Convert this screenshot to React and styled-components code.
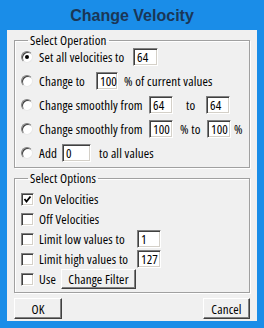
import React from "react";
import styled, { createGlobalStyle } from "styled-components";

const Global = createGlobalStyle`
  html, body { margin: 0; padding: 0; background: #1a8de8; }
  * { box-sizing: border-box; }
`;

const Window = styled.div`
  width: 264px;
  height: 328px;
  background: #1a8de8;
  padding: 0 7px 7px;
  display: flex;
  flex-direction: column;
  font-family: "Open Sans", "Liberation Sans", Arial, sans-serif;
  font-stretch: 75%;
  font-size: 13px;
  letter-spacing: 0.15px;
  color: #000;
`;

const Title = styled.div`
  height: 30px;
  display: flex;
  align-items: center;
  justify-content: center;
  font-family: "Liberation Sans", Arial, sans-serif;
  font-stretch: 100%;
  letter-spacing: 0;
  font-weight: bold;
  font-size: 16px;
  color: #1a3656;
  padding-top: 1px;
`;

const Panel = styled.div`
  flex: 1;
  background: #f0f0f0;
  padding: 5px 7px 2px;
  display: flex;
  flex-direction: column;
`;

const Group = styled.fieldset`
  margin: ${(p) => p.$mt || 0}px 0 0;
  padding: ${(p) => p.$pt || 0}px 0 ${(p) => p.$pb || 0}px 6px;
  border: 1px solid #a0a0a0;
  box-shadow: 1px 1px 0 #fff, inset 1px 1px 0 #fff;
  min-width: 0;
`;

const Legend = styled.legend`
  margin-left: 7px;
  padding: 0 2px;
  line-height: 10px;
  height: 10px;
  font-size: 13px;
`;

const Row = styled.div`
  height: ${(p) => p.$h}px;
  display: flex;
  align-items: center;
  white-space: nowrap;
`;

const Radio = styled.span`
  width: 12px;
  height: 12px;
  flex: none;
  border-radius: 50%;
  background: #fff;
  border: 1px solid;
  border-color: #808080 #e8e8e8 #e8e8e8 #808080;
  box-shadow: inset 1px 1px 0 #404040;
  display: flex;
  align-items: center;
  justify-content: center;
  margin-right: 6px;
  &::after {
    content: "";
    width: 4px;
    height: 4px;
    border-radius: 50%;
    background: ${(p) => (p.$on ? "#000" : "transparent")};
  }
`;

const Check = styled.span`
  width: 13px;
  height: 13px;
  flex: none;
  background: #fff;
  border: 1px solid;
  border-color: #808080 #fff #fff #808080;
  box-shadow: inset 1px 1px 0 #404040, inset -1px -1px 0 #d4d0c8;
  display: flex;
  align-items: center;
  justify-content: center;
  margin-right: 5px;
`;

const Text = styled.span`
  width: ${(p) => (p.$w ? `${p.$w}px` : "auto")};
  padding-left: ${(p) => p.$pl || 0}px;
  flex: none;
  overflow: visible;
`;

const Field = styled.span`
  width: ${(p) => p.$w}px;
  height: 18px;
  flex: none;
  background: #fff;
  border: 1px solid;
  border-color: #808080 #fff #fff #808080;
  box-shadow: inset 1px 1px 0 #404040, inset -1px -1px 0 #d4d0c8;
  padding: 0 0 0 3px;
  line-height: 16px;
  margin-right: ${(p) => p.$mr || 0}px;
`;

const Button = styled.button`
  width: ${(p) => p.$w}px;
  height: ${(p) => p.$h}px;
  flex: none;
  padding: 0;
  background: #f0f0f0;
  font: inherit;
  letter-spacing: inherit;
  color: #000;
  border: 1px solid;
  border-color: #fff #404040 #404040 #fff;
  box-shadow: inset -1px -1px 0 #808080;
  display: flex;
  align-items: center;
  justify-content: center;
`;

const Footer = styled.div`
  margin-top: 5px;
  display: flex;
  justify-content: space-between;
`;

const CheckMark = () => (
  <svg width="9" height="9" viewBox="0 0 9 9">
    <polyline points="1.5,4 3.5,6.5 7.5,1.5" fill="none" stroke="#000" strokeWidth="1.8" />
  </svg>
);

export default function App() {
  return (
    <>
      <Global />
      <Window>
        <Title>Change Velocity</Title>
        <Panel>
          <Group $pt={0} $pb={2}>
            <Legend>Select Operation</Legend>
            <Row $h={24}>
              <Radio $on />
              <Text $w={94}>Set all velocities to</Text>
              <Field $w={25}>64</Field>
            </Row>
            <Row $h={24}>
              <Radio />
              <Text $w={57}>Change to</Text>
              <Field $w={22} $mr={6}>100</Field>
              <Text>% of current values</Text>
            </Row>
            <Row $h={24}>
              <Radio />
              <Text $w={110}>Change smoothly from</Text>
              <Field $w={24}>64</Field>
              <Text $w={33} $pl={13}>to</Text>
              <Field $w={24}>64</Field>
            </Row>
            <Row $h={24}>
              <Radio />
              <Text $w={110}>Change smoothly from</Text>
              <Field $w={24}>100</Field>
              <Text $w={34} $pl={7}>% to</Text>
              <Field $w={24} $mr={3}>100</Field>
              <Text>%</Text>
            </Row>
            <Row $h={24}>
              <Radio />
              <Text $w={23}>Add</Text>
              <Field $w={29} $mr={8}>0</Field>
              <Text>to all values</Text>
            </Row>
          </Group>
          <Group $mt={5} $pt={6} $pb={3}>
            <Legend>Select Options</Legend>
            <Row $h={20}>
              <Check>
                <CheckMark />
              </Check>
              <Text>On Velocities</Text>
            </Row>
            <Row $h={20}>
              <Check />
              <Text>Off Velocities</Text>
            </Row>
            <Row $h={20}>
              <Check />
              <Text $w={98}>Limit low values to</Text>
              <Field $w={24}>1</Field>
            </Row>
            <Row $h={20}>
              <Check />
              <Text $w={98}>Limit high values to</Text>
              <Field $w={24}>127</Field>
            </Row>
            <Row $h={20}>
              <Check />
              <Text $w={22}>Use</Text>
              <Button $w={75} $h={20}>Change Filter</Button>
            </Row>
          </Group>
          <Footer>
            <Button $w={48} $h={21}>OK</Button>
            <Button $w={47} $h={21}>Cancel</Button>
          </Footer>
        </Panel>
      </Window>
    </>
  );
}
